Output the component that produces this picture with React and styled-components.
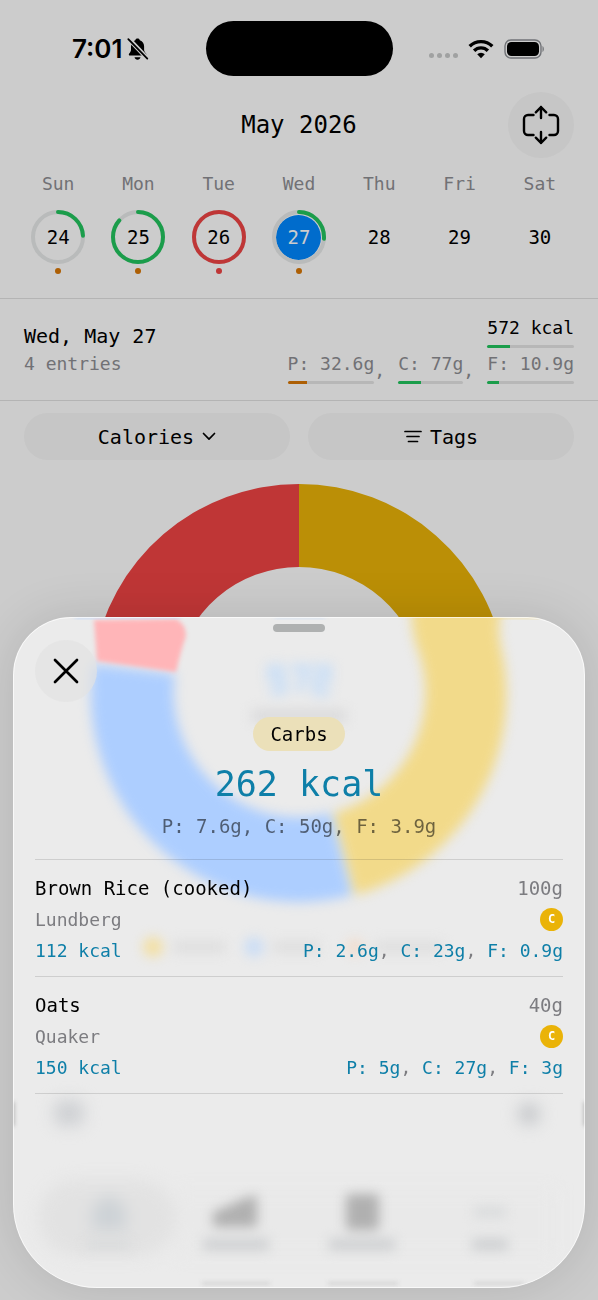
import styled, { createGlobalStyle } from "styled-components";

const days = [
  { name: "Sun", date: 24, progress: 0.24, ring: "#22c55e", dot: "#d97706" },
  { name: "Mon", date: 25, progress: 0.86, ring: "#22c55e", dot: "#d97706" },
  { name: "Tue", date: 26, progress: 1, ring: "#ef4444", dot: "#ef4444" },
  {
    name: "Wed",
    date: 27,
    progress: 0.26,
    ring: "#22c55e",
    dot: "#d97706",
    selected: true,
  },
  { name: "Thu", date: 28 },
  { name: "Fri", date: 29 },
  { name: "Sat", date: 30 },
];

const totals = [
  { label: "P: 32.6g", value: 22, color: "#d97706" },
  { label: "C: 77g", value: 35, color: "#22c55e" },
  { label: "F: 10.9g", value: 14, color: "#22c55e" },
];

const foods = [
  {
    name: "Brown Rice (cooked)",
    brand: "Lundberg",
    amount: "100g",
    kcal: "112 kcal",
    macros: ["P: 2.6g", "C: 23g", "F: 0.9g"],
  },
  {
    name: "Oats",
    brand: "Quaker",
    amount: "40g",
    kcal: "150 kcal",
    macros: ["P: 5g", "C: 27g", "F: 3g"],
  },
];

function BellOffIcon() {
  return (
    <svg width="22" height="24" viewBox="0 0 22 24" aria-hidden="true">
      <path
        d="M10.5 1.5c-1.2 0-2 .7-2.2 1.7C5.3 4.2 4 6.7 4 9.5v3.2c0 1.5-.6 2.3-1.6 3.5-.9 1-.9 2.4.8 2.4h14.9c1.5 0 1.7-1.3.7-2.4-1-1.2-1.7-2-1.7-3.5V9.5c0-2.8-1.3-5.3-4.3-6.3-.2-1-1-1.7-2.3-1.7z"
        fill="#000"
      />
      <path d="M7.5 20.200h6c-.3 1.600-1.500 2.500-3 2.500s-2.700-.9-3-2.500z" fill="#000" />
      <path d="M1.3 1.4 20.8 22" stroke="#fff" strokeWidth="4.500" />
      <path
        d="M1.3 2.2 20.3 21.600"
        stroke="#000"
        strokeWidth="1.800"
        strokeLinecap="round"
      />
    </svg>
  );
}

function WifiIcon() {
  return (
    <svg width="26" height="20" viewBox="0 0 26 20" aria-hidden="true">
      <g fill="none" stroke="#000" strokeWidth="3.4">
        <path d="M1.7 7.3a16 16 0 0 1 22.600 0" />
        <path d="M6.1 11.700a9.800 9.800 0 0 1 13.800 0" />
      </g>
      <path d="M13 19.300 9.200 15.300a5.400 5.400 0 0 1 7.600 0z" fill="#000" />
    </svg>
  );
}

function BatteryIcon() {
  return (
    <svg width="42" height="20" viewBox="0 0 42 20" aria-hidden="true">
      <rect
        x="1"
        y="1"
        width="36"
        height="18"
        rx="6"
        fill="none"
        stroke="#8d9095"
        strokeWidth="1.4"
      />
      <rect x="3" y="3" width="32" height="14" rx="4.500" fill="#000" />
      <path d="M38.500 7c1.800.8 1.800 5.200 0 6z" fill="#8d9095" />
    </svg>
  );
}

function ResizeIcon() {
  return (
    <svg
      width="40"
      height="40"
      viewBox="0 0 40 40"
      fill="none"
      stroke="#000"
      strokeWidth="2.400"
      strokeLinecap="round"
      strokeLinejoin="round"
      aria-hidden="true"
    >
      <path d="M12.500 10H7a4 4 0 0 0-4 4v12a4 4 0 0 0 4 4h5.500" />
      <path d="M28.500 10H33a4 4 0 0 1 4 4v12a4 4 0 0 1-4 4h-4.500" />
      <path d="M20 13V2M14.800 7.300 20 2l5.200 5.300" />
      <path d="M20 27v11M14.800 32.700 20 38l5.200-5.300" />
    </svg>
  );
}

function DayRing({ progress, color }) {
  const length = 2 * Math.PI * 25;
  return (
    <RingSvg viewBox="0 0 54 54" aria-hidden="true">
      <circle cx="27" cy="27" r="25" stroke="#e8eaea" />
      <circle
        cx="27"
        cy="27"
        r="25"
        stroke={color}
        strokeLinecap="round"
        strokeDasharray={`${length * progress} ${length}`}
        transform="rotate(-90 27 27)"
      />
    </RingSvg>
  );
}

function CalorieChart() {
  return (
    <Chart viewBox="0 0 416 416" role="img" aria-label="Calories by tag">
      <path
        d="M208 0A208 208 0 0 1 261.8 408.900L240.300 328.700A125 125 0 0 0 208 83z"
        fill="#eab308"
      />
      <path
        d="M261.8 408.900A208 208 0 0 1 2.300 177L84.400 189.400A125 125 0 0 0 240.300 328.700z"
        fill="#3b82f6"
      />
      <path
        d="M2.300 177A208 208 0 0 1 208 0V83A125 125 0 0 0 84.400 189.400z"
        fill="#ef4444"
      />
    </Chart>
  );
}

// soft shapes showing through the glass of the sheet
function GlassBackdrop() {
  return (
    <Glass
      viewBox="13 617 572 671"
      preserveAspectRatio="xMidYMin slice"
      aria-hidden="true"
    >
      <defs>
        <filter
          id="soft"
          x="-30%"
          y="-30%"
          width="160%"
          height="160%"
          colorInterpolationFilters="sRGB"
        >
          <feGaussianBlur stdDeviation="6" />
        </filter>
        <filter
          id="edge"
          x="-30%"
          y="-100%"
          width="160%"
          height="300%"
          colorInterpolationFilters="sRGB"
        >
          <feGaussianBlur stdDeviation="2" />
        </filter>
        <filter
          id="haze"
          x="-50%"
          y="-100%"
          width="200%"
          height="300%"
          colorInterpolationFilters="sRGB"
        >
          <feGaussianBlur stdDeviation="8" />
        </filter>
      </defs>

      <g filter="url(#soft)">
        <path
          d="M93 664A208 208 0 0 0 352 895L331 813A125 125 0 0 1 175 674z"
          fill="#adceff"
        />
        <path
          d="M411 600H503Q496 628 501 648A208 208 0 0 1 355 895L334 813A125 125 0 0 0 418 650Q411 633 411 600z"
          fill="#f2da8a"
        />
      </g>
      <path
        d="M94 620L176 619Q186 624 186 636Q181 650 176 672L97 661z"
        fill="#ffb5b8"
        filter="url(#edge)"
      />
      <path d="M75 616H180V618H75z" fill="#adceff" filter="url(#edge)" />
      <path d="M275 616H325V618H275z" fill="#c8dcf4" filter="url(#edge)" />
      <path d="M430 616H540V618H430z" fill="#f2da8a" filter="url(#edge)" />

      <g filter="url(#soft)">
        <g stroke="#cbdff6" strokeWidth="8" fill="none">
          <path d="M285 668H271V678H283V691H270" />
          <path d="M291 668H307L298 692" />
          <path d="M314 668H328V679H316V692H330" />
        </g>
        <rect x="252" y="709" width="94" height="14" fill="#dbdbdc" />
        <circle cx="153" cy="947" r="10" fill="#f3dfa2" />
        <circle cx="254" cy="947" r="10" fill="#cbddf5" />
        <circle cx="355" cy="947" r="8" fill="#f2dccb" />
        <rect x="173" y="941" width="52" height="12" fill="#dedede" />
        <rect x="272" y="941" width="48" height="12" fill="#dfdfdf" />
        <rect x="374" y="941" width="68" height="12" fill="#dfdfdf" />
      </g>

      <g filter="url(#haze)">
        <rect x="38" y="1180" width="138" height="76" rx="38" fill="#e2e2e2" />
        <rect x="176" y="1190" width="380" height="66" fill="#e9e9e9" />
        <rect x="54" y="1100" width="30" height="26" rx="8" fill="#cfd1d4" />
        <circle cx="529" cy="1114" r="11" fill="#c6c8cb" />
        <path d="M92 1208L109 1194L126 1208V1230H92z" fill="#cdd2d6" />
      </g>
      <g filter="url(#soft)">
        <path
          d="M213 1212Q230 1206 240 1200L257 1195V1227H213z"
          fill="#b0b0b0"
        />
        <rect x="346" y="1194" width="33" height="36" rx="4" fill="#b0b0b0" />
        <rect x="474" y="1207" width="32" height="10" fill="#d8dadb" />
        <rect x="86" y="1240" width="44" height="9" fill="#d8dadb" />
        <rect x="203" y="1239" width="66" height="11" fill="#ccced0" />
        <rect x="329" y="1239" width="66" height="11" fill="#ccced0" />
        <rect x="472" y="1239" width="36" height="11" fill="#ccced0" />
      </g>
      <g filter="url(#edge)" fill="#d2d2d2">
        <rect x="202" y="1282" width="68" height="3" />
        <rect x="328" y="1282" width="70" height="3" />
        <rect x="474" y="1282" width="50" height="3" />
        <rect x="10" y="1102" width="4" height="24" fill="#aaa" />
        <rect x="584" y="1102" width="4" height="24" fill="#aaa" />
      </g>
    </Glass>
  );
}

function Macros({ values }) {
  return (
    <span>
      {values.map((value, i) => (
        <span key={value}>
          {i > 0 && <Muted>, </Muted>}
          {value}
        </span>
      ))}
    </span>
  );
}

function App() {
  return (
    <>
      <GlobalStyle />
      <Page>
        <StatusBar>
          <StatusTime>
            7:01
            <BellOffIcon />
          </StatusTime>
          <Island />
          <StatusIcons>
            <Signal>
              <i />
              <i />
              <i />
              <i />
            </Signal>
            <WifiIcon />
            <BatteryIcon />
          </StatusIcons>
        </StatusBar>

        <Header>
          <Month>May 2026</Month>
          <RoundButton aria-label="Expand calendar">
            <ResizeIcon />
          </RoundButton>
        </Header>

        <Week>
          {days.map((day) => (
            <Day key={day.name}>
              <DayName>{day.name}</DayName>
              <DayButton>
                {day.ring && (
                  <DayRing progress={day.progress} color={day.ring} />
                )}
                <DayNumber $selected={day.selected}>{day.date}</DayNumber>
              </DayButton>
              <Dot $color={day.dot || "transparent"} />
            </Day>
          ))}
        </Week>

        <Summary>
          <div>
            <SummaryDate>Wed, May 27</SummaryDate>
            <SummaryCount>4 entries</SummaryCount>
          </div>
          <SummaryStats>
            <Stat $dark>
              572 kcal
              <Bar $value={27} $color="#22c55e" />
            </Stat>
            <StatRow>
              {totals.map((total, i) => (
                <StatItem key={total.label}>
                  {i > 0 && <Comma>,</Comma>}
                  <Stat>
                    {total.label}
                    <Bar $value={total.value} $color={total.color} />
                  </Stat>
                </StatItem>
              ))}
            </StatRow>
          </SummaryStats>
        </Summary>

        <Filters>
          <FilterButton>
            Calories
            <svg width="14" height="9" viewBox="0 0 14 9" aria-hidden="true">
              <path
                d="M1.500 1.500 7 7.200 12.500 1.500"
                fill="none"
                stroke="#000"
                strokeWidth="1.700"
                strokeLinecap="round"
                strokeLinejoin="round"
              />
            </svg>
          </FilterButton>
          <FilterButton>
            <svg width="18" height="14" viewBox="0 0 18 14" aria-hidden="true">
              <path
                d="M1 1.500h16M3 6.500h12M4.500 11.500h9"
                stroke="#000"
                strokeWidth="1.700"
                strokeLinecap="round"
              />
            </svg>
            Tags
          </FilterButton>
        </Filters>

        <CalorieChart />
      </Page>

      <Scrim />

      <Sheet role="dialog" aria-label="Carbs">
        <GlassBackdrop />
        <SheetBody>
          <Grabber />
          <CloseButton aria-label="Close">
            <svg width="26" height="26" viewBox="0 0 26 26" aria-hidden="true">
              <path
                d="M2 2 24 24M24 2 2 24"
                stroke="#000"
                strokeWidth="2.700"
                strokeLinecap="round"
              />
            </svg>
          </CloseButton>

          <Hero>
            <Tag>Carbs</Tag>
            <Kcal>262 kcal</Kcal>
            <HeroMacros>P: 7.6g, C: 50g, F: 3.9g</HeroMacros>
          </Hero>

          <FoodList>
            {foods.map((food) => (
              <Food key={food.name}>
                <FoodRow>
                  <span>{food.name}</span>
                  <Muted>{food.amount}</Muted>
                </FoodRow>
                <FoodRow $small>
                  <Muted>{food.brand}</Muted>
                  <Badge>C</Badge>
                </FoodRow>
                <FoodRow $small $accent>
                  <span>{food.kcal}</span>
                  <Macros values={food.macros} />
                </FoodRow>
              </Food>
            ))}
          </FoodList>
        </SheetBody>
      </Sheet>
    </>
  );
}

const GlobalStyle = createGlobalStyle`
  * {
    box-sizing: border-box;
  }

  body {
    margin: 0;
    background-color: #fff;
    color: #000;
    font-family: "DejaVu Sans Mono", "Liberation Mono", monospace;
    overflow: hidden;
  }

  button {
    font: inherit;
    color: inherit;
    border: none;
    padding: 0;
    cursor: pointer;
  }

  svg {
    display: block;
    flex-shrink: 0;
  }
`;

const Page = styled.main`
  min-height: 100vh;
`;

const StatusBar = styled.div`
  display: grid;
  grid-template-columns: 1fr auto 1fr;
  align-items: center;
  padding-top: 21px;
`;

const StatusTime = styled.div`
  display: flex;
  align-items: center;
  justify-content: flex-end;
  gap: 4px;
  padding-right: 57px;
  font-family: Inter, sans-serif;
  font-size: 26px;
  font-weight: 600;
`;

const Island = styled.div`
  width: 187px;
  height: 55px;
  border-radius: 28px;
  background-color: #000;
`;

const StatusIcons = styled.div`
  display: flex;
  align-items: center;
  gap: 10px;
  padding-left: 36px;
`;

const Signal = styled.div`
  display: flex;
  gap: 3px;
  padding-top: 14px;

  i {
    width: 5px;
    height: 5px;
    border-radius: 50%;
    background-color: #c8caca;
  }
`;

const Header = styled.header`
  display: grid;
  grid-template-columns: 1fr auto 1fr;
  align-items: center;
  padding: 16px 24px 0;
`;

const Month = styled.h1`
  grid-column: 2;
  margin: 0;
  font-size: 24px;
  font-weight: 400;
`;

const RoundButton = styled.button`
  justify-self: end;
  display: flex;
  align-items: center;
  justify-content: center;
  width: 66px;
  height: 66px;
  border-radius: 50%;
  background-color: #f8f8f8;
`;

const Week = styled.div`
  display: grid;
  grid-template-columns: repeat(7, 1fr);
  padding: 14px 18px 24px;
  border-bottom: 1px solid #e2e2e2;
`;

const Day = styled.div`
  display: flex;
  flex-direction: column;
  align-items: center;
`;

const DayName = styled.span`
  font-size: 18px;
  line-height: 24px;
  color: #8e8e93;
`;

const DayButton = styled.button`
  position: relative;
  display: flex;
  align-items: center;
  justify-content: center;
  width: 54px;
  height: 54px;
  margin-top: 14px;
  border-radius: 50%;
  background: none;
`;

const RingSvg = styled.svg`
  position: absolute;
  inset: 0;
  fill: none;
  stroke-width: 4px;
`;

const DayNumber = styled.span`
  width: 45px;
  border-radius: 50%;
  font-size: 19px;
  line-height: 45px;
  color: ${({ $selected }) => ($selected ? "#fff" : "#000")};
  background-color: ${({ $selected }) =>
    $selected ? "#0088ff" : "transparent"};
`;

const Dot = styled.span`
  width: 6px;
  height: 6px;
  margin-top: 4px;
  border-radius: 50%;
  background-color: ${({ $color }) => $color};
`;

const Summary = styled.section`
  display: flex;
  align-items: center;
  justify-content: space-between;
  padding: 16px 24px;
  border-bottom: 1px solid #e2e2e2;
`;

const SummaryDate = styled.div`
  font-size: 20px;
  line-height: 28px;
`;

const SummaryCount = styled.div`
  font-size: 18px;
  line-height: 28px;
  color: #8e8e93;
`;

const SummaryStats = styled.div`
  display: flex;
  flex-direction: column;
  align-items: flex-end;
  gap: 3px;
`;

const StatRow = styled.div`
  display: flex;
`;

const StatItem = styled.div`
  display: flex;
  align-items: flex-end;
`;

const Stat = styled.div`
  font-size: 18px;
  line-height: 26px;
  color: ${({ $dark }) => ($dark ? "#000" : "#8e8e93")};
`;

const Comma = styled.span`
  width: 24px;
  font-size: 18px;
  line-height: 26px;
  color: #8e8e93;
`;

const Bar = styled.div`
  height: 3px;
  margin-top: 4px;
  border-radius: 2px;
  background: linear-gradient(
    to right,
    ${({ $color, $value }) => `${$color} ${$value}%, #e5e5e5 ${$value}%`}
  );
`;

const Filters = styled.div`
  display: grid;
  grid-template-columns: 1fr 1fr;
  gap: 18px;
  padding: 12px 24px 24px;
`;

const FilterButton = styled.button`
  display: flex;
  align-items: center;
  justify-content: center;
  gap: 8px;
  height: 47px;
  border-radius: 24px;
  font-size: 20px;
  background-color: #f8f8f8;
`;

const Chart = styled.svg`
  width: 416px;
  max-width: 100%;
  margin: 0 auto;
`;

const Scrim = styled.div`
  position: fixed;
  inset: 0;
  background-color: rgba(0, 0, 0, 0.2);
`;

const Sheet = styled.section`
  position: fixed;
  left: 13px;
  right: 13px;
  bottom: 12px;
  overflow: hidden;
  border-radius: 58px 58px 84px 84px;
  background-color: #ebebeb;
  box-shadow: 0 0 50px rgba(0, 0, 0, 0.12);

  &::after {
    content: "";
    position: absolute;
    inset: 0;
    border: 1px solid rgba(255, 255, 255, 0.7);
    border-radius: inherit;
    pointer-events: none;
  }
`;

const Glass = styled.svg`
  position: absolute;
  inset: 0;
  width: 100%;
  height: 100%;
`;

const SheetBody = styled.div`
  position: relative;
  display: flex;
  flex-direction: column;
  padding: 7px 22px 194px;
`;

const Grabber = styled.div`
  align-self: center;
  width: 52px;
  height: 8px;
  border-radius: 4px;
  background-color: #afb1b1;
`;

const CloseButton = styled.button`
  display: flex;
  align-items: center;
  justify-content: center;
  width: 62px;
  height: 62px;
  margin-top: 8px;
  border-radius: 50%;
  background-color: rgba(226, 226, 226, 0.7);
`;

const Hero = styled.div`
  display: flex;
  flex-direction: column;
  align-items: center;
  padding: 15px 0 21px;
  border-bottom: 1px solid rgba(0, 0, 0, 0.12);
`;

const Tag = styled.span`
  padding: 0 17px;
  border-radius: 17px;
  font-size: 19px;
  line-height: 34px;
  background-color: #ebe0b9;
`;

const Kcal = styled.div`
  margin-top: 12px;
  font-size: 35px;
  line-height: 42px;
  color: #0e7fa8;
`;

const HeroMacros = styled.div`
  margin-top: 9px;
  font-size: 19px;
  line-height: 24px;
  color: rgba(0, 0, 0, 0.55);
`;

const FoodList = styled.ul`
  margin: 0;
  padding: 0;
  list-style: none;
`;

const Food = styled.li`
  padding: 13px 0 10px;
  border-bottom: 1px solid rgba(0, 0, 0, 0.12);
`;

const FoodRow = styled.div`
  display: flex;
  align-items: center;
  justify-content: space-between;
  font-size: ${({ $small }) => ($small ? "18px" : "19px")};
  line-height: 31px;
  color: ${({ $accent }) => ($accent ? "#0e7fa8" : "#000")};
`;

const Muted = styled.span`
  color: #7c7c80;
`;

const Badge = styled.span`
  width: 23px;
  border-radius: 50%;
  font-size: 12px;
  font-weight: 700;
  line-height: 23px;
  text-align: center;
  color: #fff;
  background-color: #eab308;
`;

export default App;
